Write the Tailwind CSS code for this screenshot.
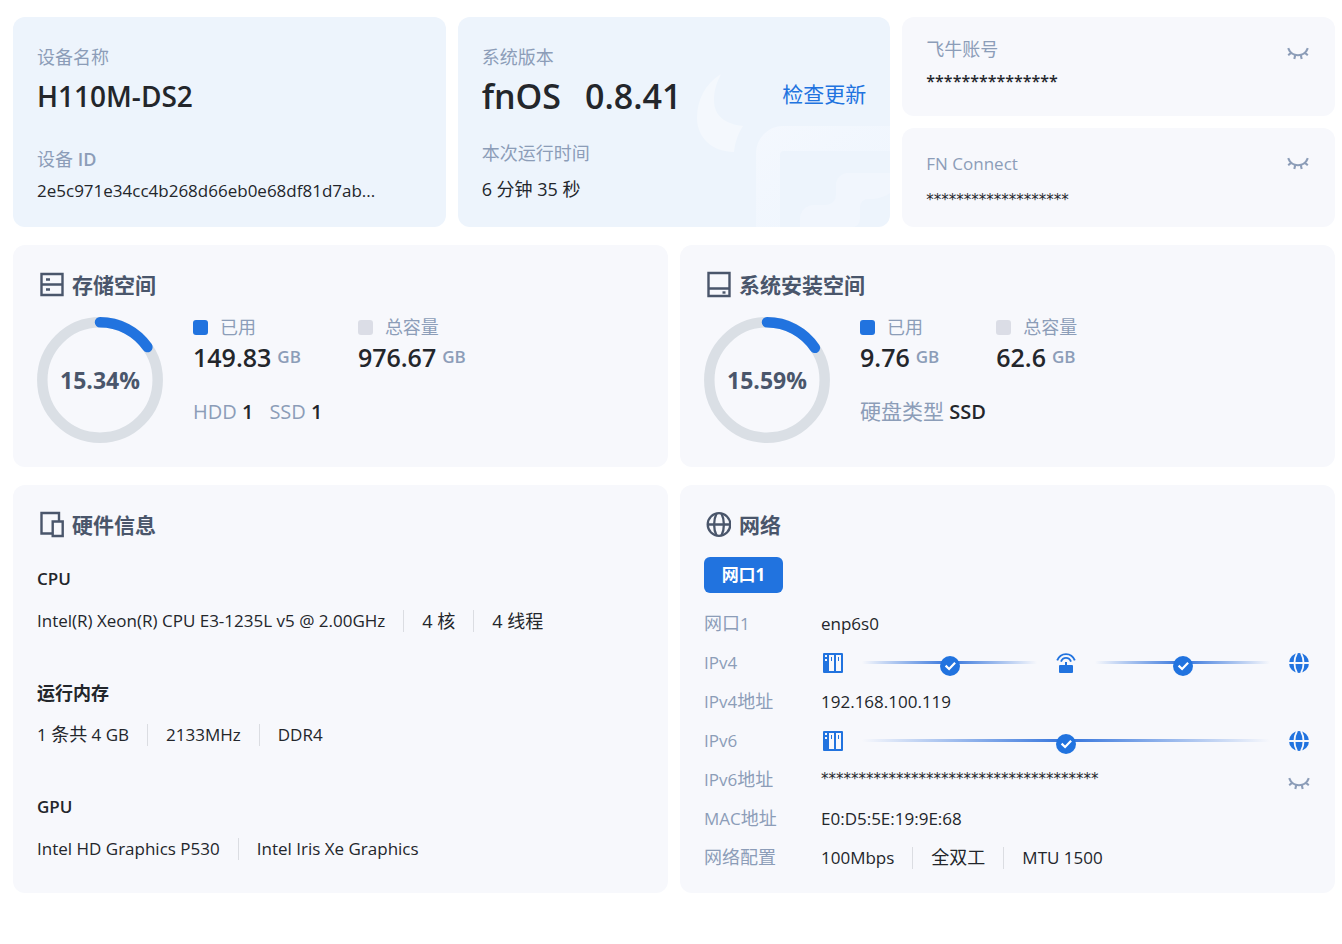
<!DOCTYPE html>
<html lang="zh-CN">
<head>
  <meta charset="UTF-8" />
  <meta name="viewport" content="width=device-width, initial-scale=1" />
  <title>设备信息</title>
  <script src="https://cdn.jsdelivr.net/npm/@tailwindcss/browser@4"></script>
</head>
<body class="bg-white font-['Open_Sans','Noto_Sans_CJK_SC',sans-serif] text-[17px] leading-8 text-[#23262b]">

  <!-- Shared icons -->
  <svg class="hidden" xmlns="http://www.w3.org/2000/svg">
    <symbol id="eye" viewBox="0 0 22 14">
      <path d="M1.200 1.200C2.800 5.600 6.400 8.300 11 8.300S19.200 5.600 20.800 1.200M4 5.900 1.200 8.200M8.200 8.300 7.300 12M13.800 8.300l.9 3.700M18 5.900l2.800 2.300" fill="none" stroke="currentColor" stroke-width="2.100" />
    </symbol>
    <symbol id="nas" viewBox="0 0 20 20">
      <path fill="currentColor" fill-rule="evenodd" d="M1 0h18a1 1 0 0 1 1 1v18a1 1 0 0 1-1 1H1a1 1 0 0 1-1-1V1a1 1 0 0 1 1-1ZM2 2v2h2V2ZM2 6v2h2V6ZM6 2v16h5V2ZM13 2v16h5V2Z" />
      <path fill="currentColor" d="M8 4h1v4H8ZM15 4h1v4h-1Z" />
    </symbol>
    <symbol id="router" viewBox="0 0 20 20">
      <path fill="none" stroke="currentColor" stroke-width="1.900" d="M1.200 7.400C4.600-1 15.400-1 18.800 7.400M5 8.600C7 3.600 13 3.600 15 8.600" />
      <path fill="currentColor" d="M9 9h2v3h5a1 1 0 0 1 1 1v6a1 1 0 0 1-1 1H4a1 1 0 0 1-1-1v-6a1 1 0 0 1 1-1h5Z" />
    </symbol>
    <symbol id="globe" viewBox="0 0 20 20">
      <circle cx="10" cy="10" r="10" fill="currentColor" />
      <path fill="none" stroke="#f7f8fc" stroke-width="1.800" d="M0 10h20M8 0C4.600 6 4.600 14 8 20M12 0c3.400 6 3.400 14 0 20" />
    </symbol>
    <symbol id="check" viewBox="0 0 20 20">
      <circle cx="10" cy="10" r="10" fill="currentColor" />
      <path fill="none" stroke="#fff" stroke-width="2.200" d="m5.600 9.600 3.500 3.400 6-6.200" />
    </symbol>
  </svg>

  <main class="pt-[17px] pr-[7px] pb-12 pl-[13px] space-y-[18px]">

    <!-- Device / system / account -->
    <div class="grid grid-cols-3 gap-3">
      <section class="bg-[#edf4fc] rounded-xl px-6 pt-6 pb-5">
        <p class="text-lg/8 text-[#8c9db8]">设备名称</p>
        <h1 class="text-[28px]/[46px] font-semibold">H110M-DS2</h1>
        <p class="mt-6 text-lg/8 text-[#8c9db8]">设备 <span class="font-semibold">ID</span></p>
        <p>2e5c971e34cc4b268d66eb0e68df81d7ab...</p>
      </section>

      <section class="relative overflow-hidden bg-[#edf4fc] rounded-xl px-6 pt-6 pb-5">
        <svg class="absolute right-0 bottom-0 w-[193px] h-[153px]" viewBox="0 0 193 153">
          <defs>
            <linearGradient id="mark" x1="0" y1="0" x2="1" y2="1">
              <stop offset="0" stop-color="#f4f8fe" />
              <stop offset="1" stop-color="#eef5fd" />
            </linearGradient>
          </defs>
          <path fill="#f4f8fd" d="M24 0C8 10 0 26 0 44c0 20 16 34 37 34 1-10 4-18 9-26-18-2-29-10-29-26 0-10 3-18 7-26Z" />
          <path fill="url(#mark)" d="M59 153V79a27 27 0 0 1 27-27h107v25H87a4 4 0 0 0-4 4v72Z" />
          <path fill="#f1f6fd" d="M193 99h-42a12 12 0 0 0-12 12v10a10 10 0 0 1-10 10h-12a14 14 0 0 0-14 14v8h52a8 8 0 0 0 8-8v-12a8 8 0 0 1 8-8c10 0 16-2 22-6Z" />
        </svg>
        <div class="relative">
          <p class="text-lg/8 text-[#8c9db8]">系统版本</p>
          <div class="flex items-center justify-between">
            <h2 class="flex gap-6 text-[34px]/[46px] font-semibold"><span>fnOS</span><span>0.8.41</span></h2>
            <button class="pb-1 text-[21px]/8 text-[#2173df]">检查更新</button>
          </div>
          <p class="mt-[18px] text-lg/8 text-[#8c9db8]">本次运行时间</p>
          <p class="mt-1 text-lg/8">6 分钟 35 秒</p>
        </div>
      </section>

      <div class="grid grid-rows-2 gap-3">
        <section class="flex items-start justify-between bg-[#f7f8fc] rounded-xl px-6 pt-4">
          <div>
            <p class="text-lg/8 text-[#8c9db8]">飞牛账号</p>
            <p class="text-base/8 font-semibold">***************</p>
          </div>
          <button class="mt-[14px] mr-0.5 text-[#8c9db8]" aria-label="显示飞牛账号"><svg class="w-[22px] h-[14px]"><use href="#eye" /></svg></button>
        </section>
        <section class="flex items-start justify-between bg-[#f7f8fc] rounded-xl px-6 pt-5">
          <div>
            <p class="text-[#8c9db8]">FN Connect</p>
            <p class="mt-1 font-['DejaVu_Sans',sans-serif] text-[15px]/8">*******************</p>
          </div>
          <button class="mt-[9px] mr-0.5 text-[#8c9db8]" aria-label="显示 FN Connect"><svg class="w-[22px] h-[14px]"><use href="#eye" /></svg></button>
        </section>
      </div>
    </div>

    <!-- Storage -->
    <div class="grid grid-cols-2 gap-3">
      <section class="bg-[#f7f8fc] rounded-xl p-6">
        <h2 class="flex items-center gap-2 text-[21px]/8 font-bold text-[#4a566b]">
          <svg class="ml-[2px] w-[25px] h-[28px]" viewBox="0 0 25 28" fill="none" stroke="currentColor" stroke-width="2.400">
            <path d="M2.500 3h21v21h-21ZM2.500 13.500h21" />
            <path d="M7 8.500h4M7 18.500h4" />
          </svg>
          存储空间
        </h2>
        <div class="mt-4 flex gap-[30px]">
          <div class="relative size-[126px]">
            <svg class="size-full -rotate-90" viewBox="0 0 126 126" fill="none" stroke-width="10.500">
              <circle cx="63" cy="63" r="57.700" stroke="#dadfe5" />
              <circle cx="63" cy="63" r="57.700" stroke="#2173df" stroke-linecap="round" pathLength="100" stroke-dasharray="15.340 100" />
            </svg>
            <span class="absolute inset-0 flex items-center justify-center text-[23px]/8 font-bold text-[#4a566b]">15.34%</span>
          </div>
          <div>
            <div class="flex gap-[57px]">
              <div>
                <p class="flex items-center gap-3 text-lg/5 text-[#8c9db8]"><i class="size-[15px] rounded-[3px] bg-[#2173df]"></i>已用</p>
                <p class="flex items-center gap-[6px] text-[25px]/[40px] font-semibold">149.83 <span class="text-[17px] text-[#8c9db8]">GB</span></p>
              </div>
              <div>
                <p class="flex items-center gap-3 text-lg/5 text-[#8c9db8]"><i class="size-[15px] rounded-[3px] bg-[#dbdde6]"></i>总容量</p>
                <p class="flex items-center gap-[6px] text-[25px]/[40px] font-semibold">976.67 <span class="text-[17px] text-[#8c9db8]">GB</span></p>
              </div>
            </div>
            <p class="mt-[19px] flex gap-4 text-xl/8 text-[#8c9db8]">
              <span>HDD <span class="font-semibold text-[#23262b]">1</span></span>
              <span>SSD <span class="font-semibold text-[#23262b]">1</span></span>
            </p>
          </div>
        </div>
      </section>

      <section class="bg-[#f7f8fc] rounded-xl p-6">
        <h2 class="flex items-center gap-2 text-[21px]/8 font-bold text-[#4a566b]">
          <svg class="ml-[2px] w-[25px] h-[28px]" viewBox="0 0 25 28" fill="none" stroke="currentColor" stroke-width="2.400">
            <path d="M2.500 2h21v23h-21ZM2.500 17.500h21" />
            <path d="M16.500 21.500h3" />
          </svg>
          系统安装空间
        </h2>
        <div class="mt-4 flex gap-[30px]">
          <div class="relative size-[126px]">
            <svg class="size-full -rotate-90" viewBox="0 0 126 126" fill="none" stroke-width="10.500">
              <circle cx="63" cy="63" r="57.700" stroke="#dadfe5" />
              <circle cx="63" cy="63" r="57.700" stroke="#2173df" stroke-linecap="round" pathLength="100" stroke-dasharray="15.590 100" />
            </svg>
            <span class="absolute inset-0 flex items-center justify-center text-[23px]/8 font-bold text-[#4a566b]">15.59%</span>
          </div>
          <div>
            <div class="flex gap-[57px]">
              <div>
                <p class="flex items-center gap-3 text-lg/5 text-[#8c9db8]"><i class="size-[15px] rounded-[3px] bg-[#2173df]"></i>已用</p>
                <p class="flex items-center gap-[6px] text-[25px]/[40px] font-semibold">9.76 <span class="text-[17px] text-[#8c9db8]">GB</span></p>
              </div>
              <div>
                <p class="flex items-center gap-3 text-lg/5 text-[#8c9db8]"><i class="size-[15px] rounded-[3px] bg-[#dbdde6]"></i>总容量</p>
                <p class="flex items-center gap-[6px] text-[25px]/[40px] font-semibold">62.6 <span class="text-[17px] text-[#8c9db8]">GB</span></p>
              </div>
            </div>
            <p class="mt-[19px] text-xl/8"><span class="text-[21px] leading-none text-[#8c9db8]">硬盘类型</span> <span class="font-semibold">SSD</span></p>
          </div>
        </div>
      </section>
    </div>

    <!-- Hardware / network -->
    <div class="grid grid-cols-2 gap-3">
      <section class="bg-[#f7f8fc] rounded-xl p-6">
        <h2 class="flex items-center gap-2 text-[21px]/8 font-bold text-[#4a566b]">
          <svg class="ml-[2px] w-[25px] h-[28px]" viewBox="0 0 25 28" fill="none" stroke="currentColor" stroke-width="2.400">
            <path d="M13.500 22.500h-11V2h17.500v8.500M13.700 10.500h10V25h-10Z" />
          </svg>
          硬件信息
        </h2>
        <div class="mt-[22px] space-y-10">
          <div>
            <h3 class="font-semibold">CPU</h3>
            <p class="mt-[10px] flex items-center gap-[18px]">
              <span>Intel(R) Xeon(R) CPU E3-1235L v5 @ 2.00GHz</span>
              <i class="w-px h-[22px] bg-[#dbdde2]"></i>
              <span class="text-lg/8">4 核</span>
              <i class="w-px h-[22px] bg-[#dbdde2]"></i>
              <span class="text-lg/8">4 线程</span>
            </p>
          </div>
          <div>
            <h3 class="text-lg/8 font-bold">运行内存</h3>
            <p class="mt-[10px] flex items-center gap-[18px]">
              <span>1 <span class="text-lg leading-none">条共</span> 4 GB</span>
              <i class="w-px h-[22px] bg-[#dbdde2]"></i>
              <span>2133MHz</span>
              <i class="w-px h-[22px] bg-[#dbdde2]"></i>
              <span>DDR4</span>
            </p>
          </div>
          <div>
            <h3 class="font-semibold">GPU</h3>
            <p class="mt-[10px] flex items-center gap-[18px]">
              <span>Intel HD Graphics P530</span>
              <i class="w-px h-[22px] bg-[#dbdde2]"></i>
              <span>Intel Iris Xe Graphics</span>
            </p>
          </div>
        </div>
      </section>

      <section class="bg-[#f7f8fc] rounded-xl px-6 pt-6 pb-4">
        <h2 class="flex items-center gap-2 text-[21px]/8 font-bold text-[#4a566b]">
          <svg class="ml-[2px] w-[25px] h-[28px]" viewBox="0 0 25 28" fill="none" stroke="currentColor" stroke-width="2.300">
            <circle cx="13" cy="13.500" r="11.300" />
            <path d="M1.500 13.500h23M10.500 2.500c-3.200 6.500-3.200 15.500 0 22M15.500 2.500c3.200 6.500 3.200 15.500 0 22" />
          </svg>
          网络
        </h2>
        <button class="mt-4 block h-9 w-[79px] rounded-md bg-[#2173df] text-[17px] font-bold text-white">网口1</button>
        <dl class="mt-[11px] grid grid-cols-[117px_1fr] leading-[39px]">
          <dt class="text-[#8c9db8]"><span class="text-lg leading-none">网口</span>1</dt>
          <dd>enp6s0</dd>
          <dt class="text-[#8c9db8]">IPv4</dt>
          <dd class="flex items-center gap-[17px] text-[#2173df]">
            <svg class="mx-[2px] size-5"><use href="#nas" /></svg>
            <div class="relative h-[3px] flex-1 bg-linear-to-r from-[#2173df]/0 via-[#3474dc] to-[#2173df]/0">
              <svg class="absolute left-1/2 -top-[5px] -ml-[10px] size-5"><use href="#check" /></svg>
            </div>
            <svg class="mx-[2px] size-5"><use href="#router" /></svg>
            <div class="relative h-[3px] flex-1 bg-linear-to-r from-[#2173df]/0 via-[#3474dc] to-[#2173df]/0">
              <svg class="absolute left-1/2 -top-[5px] -ml-[10px] size-5"><use href="#check" /></svg>
            </div>
            <svg class="mx-[2px] size-5"><use href="#globe" /></svg>
          </dd>
          <dt class="text-[#8c9db8]">IPv4<span class="text-lg leading-none">地址</span></dt>
          <dd>192.168.100.119</dd>
          <dt class="text-[#8c9db8]">IPv6</dt>
          <dd class="flex items-center gap-[17px] text-[#2173df]">
            <svg class="mx-[2px] size-5"><use href="#nas" /></svg>
            <div class="relative h-[3px] flex-1 bg-linear-to-r from-[#2173df]/0 via-[#3474dc] to-[#2173df]/0">
              <svg class="absolute left-1/2 -top-[5px] -ml-[10px] size-5"><use href="#check" /></svg>
            </div>
            <svg class="mx-[2px] size-5"><use href="#globe" /></svg>
          </dd>
          <dt class="text-[#8c9db8]">IPv6<span class="text-lg leading-none">地址</span></dt>
          <dd class="flex items-center justify-between">
            <span class="font-['DejaVu_Sans',sans-serif] text-[15px]/[39px]">*************************************</span>
            <button class="mr-px pt-2 text-[#8c9db8]" aria-label="显示 IPv6 地址"><svg class="w-[22px] h-[14px]"><use href="#eye" /></svg></button>
          </dd>
          <dt class="text-[#8c9db8]">MAC<span class="text-lg leading-none">地址</span></dt>
          <dd>E0:D5:5E:19:9E:68</dd>
          <dt class="text-lg/[39px] text-[#8c9db8]">网络配置</dt>
          <dd class="flex items-center gap-[18px]">
            <span>100Mbps</span>
            <i class="w-px h-[22px] bg-[#dbdde2]"></i>
            <span class="text-lg/[39px]">全双工</span>
            <i class="w-px h-[22px] bg-[#dbdde2]"></i>
            <span>MTU 1500</span>
          </dd>
        </dl>
      </section>
    </div>
  </main>

</body>
</html>
